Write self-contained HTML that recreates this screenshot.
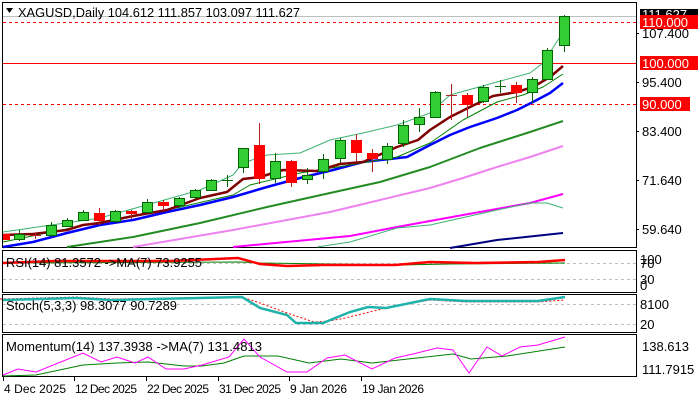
<!DOCTYPE html>
<html><head><meta charset="utf-8"><style>
html,body{margin:0;padding:0;background:#fff;}
svg{display:block;font-family:"Liberation Sans",sans-serif;}
</style></head><body>
<svg width="700" height="400" viewBox="0 0 700 400" xmlns="http://www.w3.org/2000/svg">
<rect width="700" height="400" fill="#fff"/>
<g fill="none" stroke="#000" stroke-width="1">
<rect x="2.5" y="2.5" width="634" height="245"/>
<rect x="2.5" y="250.5" width="634" height="42"/>
<rect x="2.5" y="294.5" width="634" height="38"/>
<rect x="2.5" y="334.5" width="634" height="42"/>
</g>
<line x1="3" y1="16.5" x2="636" y2="16.5" stroke="#c0c0c0"/>
<line x1="3" y1="22.5" x2="636" y2="22.5" stroke="#f00" stroke-dasharray="3,3"/>
<line x1="3" y1="63.5" x2="636" y2="63.5" stroke="#f00"/>
<line x1="3" y1="104.5" x2="636" y2="104.5" stroke="#f00" stroke-dasharray="3,3"/>
<g fill="none" stroke-linejoin="round">
<polyline stroke="#000080" stroke-width="2" points="450,248 497,240 563,233"/>
<polyline stroke="#ff00ff" stroke-width="2" points="233,247 350,236 397,227 463,215 530,203 563,194"/>
<polyline stroke="#ee82ee" stroke-width="2" points="133,247 233,230 330,212 380,200 430,188 463,178 497,167 530,157 563,146"/>
<polyline stroke="#228b22" stroke-width="2" points="67,247 133,237 200,223 267,207 330,193 380,182 430,167 480,148 530,132 563,121"/>
<polyline stroke="#3cb371" stroke-width="1" points="317,247 350,242 397,228 430,225 497,210 530,203 547,203 563,208"/>
<polyline stroke="#0000ff" stroke-width="2.5" points="3,247 33,242 67,233 100,225 133,220 167,212 200,205 233,197 267,187 300,178 333,170 363,162 407,157 430,145 450,135 470,127 497,118 517,110 533,102 550,93 563,83"/>
<polyline stroke="#008000" stroke-width="1" points="3,242 100,222 167,210 233,195 250,185 300,173 350,165 397,157 430,143 463,120 497,102 523,95 543,87 563,74"/>
<polyline stroke="#3cb371" stroke-width="1" points="3,232 100,218 200,190 233,175 243,163 267,155 300,153 330,140 363,133 397,125 430,113 450,95 497,82 530,73 543,63 560,37"/>
<polyline stroke="#800000" stroke-width="2.5" points="3,235 33,234 67,230 83,225 100,223 133,216 167,210 200,198 227,192 243,179 260,177 283,170 317,171 340,164 363,162 397,147 418,140 430,130 450,117 470,107 493,96 517,92 533,87 550,77 563,66"/>
</g>
<g stroke-width="1">
<g stroke="#006400">
<line x1="19.5" y1="230" x2="19.5" y2="241"/><rect x="14.5" y="234.5" width="10" height="5" fill="#32cd32"/>
<line x1="51.5" y1="222" x2="51.5" y2="237"/><rect x="46.5" y="225.5" width="10" height="10" fill="#32cd32"/>
<line x1="67.5" y1="218" x2="67.5" y2="227"/><rect x="62.5" y="220.5" width="10" height="6" fill="#32cd32"/>
<line x1="83.5" y1="210" x2="83.5" y2="221"/><rect x="78.5" y="212.5" width="10" height="8" fill="#32cd32"/>
<line x1="115.5" y1="210" x2="115.5" y2="223"/><rect x="110.5" y="211.5" width="10" height="10" fill="#32cd32"/>
<line x1="147.5" y1="199" x2="147.5" y2="213"/><rect x="142.5" y="202.5" width="10" height="10" fill="#32cd32"/>
<line x1="179.5" y1="197" x2="179.5" y2="209"/><rect x="174.5" y="198.5" width="10" height="7" fill="#32cd32"/>
<line x1="195.5" y1="189" x2="195.5" y2="199"/><rect x="190.5" y="190.5" width="10" height="7" fill="#32cd32"/>
<line x1="211.5" y1="179" x2="211.5" y2="191"/><rect x="206.5" y="180.5" width="10" height="10" fill="#32cd32"/>
<line x1="227.5" y1="175" x2="227.5" y2="187"/><line x1="222" y1="180.5" x2="233" y2="180.5"/>
<line x1="243.5" y1="148" x2="243.5" y2="173"/><rect x="238.5" y="148.5" width="10" height="19" fill="#32cd32"/>
<line x1="275.5" y1="153" x2="275.5" y2="183"/><rect x="270.5" y="161.5" width="10" height="17" fill="#32cd32"/>
<line x1="307.5" y1="168" x2="307.5" y2="184"/><rect x="302.5" y="175.5" width="10" height="4" fill="#32cd32"/>
<line x1="323.5" y1="154" x2="323.5" y2="179"/><rect x="318.5" y="159.5" width="10" height="12" fill="#32cd32"/>
<line x1="340.5" y1="138" x2="340.5" y2="163"/><rect x="335.5" y="140.5" width="10" height="18" fill="#32cd32"/>
<line x1="387.5" y1="143" x2="387.5" y2="164"/><rect x="382.5" y="146.5" width="10" height="13" fill="#32cd32"/>
<line x1="403.5" y1="120" x2="403.5" y2="147"/><rect x="398.5" y="125.5" width="10" height="18" fill="#32cd32"/>
<line x1="419.5" y1="108" x2="419.5" y2="132"/><rect x="414.5" y="117.5" width="10" height="7" fill="#32cd32"/>
<line x1="435.5" y1="91" x2="435.5" y2="118"/><rect x="430.5" y="92.5" width="10" height="25" fill="#32cd32"/>
<line x1="483.5" y1="85" x2="483.5" y2="103"/><rect x="478.5" y="87.5" width="10" height="14" fill="#32cd32"/>
<line x1="500.5" y1="80" x2="500.5" y2="93"/><line x1="495" y1="86.5" x2="506" y2="86.5"/>
<line x1="532.5" y1="77" x2="532.5" y2="103"/><rect x="527.5" y="79.5" width="10" height="13" fill="#32cd32"/>
<line x1="547.5" y1="48" x2="547.5" y2="80"/><rect x="542.5" y="50.5" width="10" height="29" fill="#32cd32"/>
<line x1="564.5" y1="15" x2="564.5" y2="52"/><rect x="559.5" y="16.5" width="10" height="29" fill="#32cd32"/>
</g>
<g stroke="#b22222">
<rect x="3" y="234" width="7" height="6" fill="#f00" stroke="none"/>
<line x1="35.5" y1="233" x2="35.5" y2="239"/><line x1="30" y1="235.5" x2="41" y2="235.5"/>
<line x1="99.5" y1="208" x2="99.5" y2="225"/><rect x="94" y="213" width="11" height="8" fill="#f00" stroke="none"/>
<line x1="131.5" y1="210" x2="131.5" y2="219"/><rect x="126" y="211" width="11" height="3" fill="#f00" stroke="none"/>
<line x1="163.5" y1="200" x2="163.5" y2="209"/><rect x="158" y="202" width="11" height="4" fill="#f00" stroke="none"/>
<line x1="259.5" y1="123" x2="259.5" y2="184"/><rect x="254" y="145" width="11" height="34" fill="#f00" stroke="none"/>
<line x1="291.5" y1="160" x2="291.5" y2="187"/><rect x="286" y="161" width="11" height="22" fill="#f00" stroke="none"/>
<line x1="356.5" y1="134" x2="356.5" y2="162"/><rect x="351" y="140" width="11" height="13" fill="#f00" stroke="none"/>
<line x1="372.5" y1="149" x2="372.5" y2="172"/><rect x="367" y="153" width="11" height="6" fill="#f00" stroke="none"/>
<line x1="451.5" y1="84" x2="451.5" y2="120"/><line x1="446" y1="95.5" x2="457" y2="95.5"/>
<line x1="467.5" y1="93" x2="467.5" y2="117"/><rect x="462" y="95" width="11" height="10" fill="#f00" stroke="none"/>
<line x1="516.5" y1="82" x2="516.5" y2="103"/><rect x="511" y="85" width="11" height="8" fill="#f00" stroke="none"/>
</g>
</g>
<path d="M6 8 L13 8 L9.5 13 Z" fill="#000"/>
<text x="18" y="17" font-size="13" fill="#000" textLength="282" lengthAdjust="spacingAndGlyphs">XAGUSD,Daily  104.612 111.857 103.097 111.627</text>
<g font-size="13" fill="#000">
<rect x="640" y="9" width="58" height="10" fill="#000"/>
<text x="642" y="19" fill="#fff">111.627</text>
<rect x="640" y="15" width="58" height="14" fill="#f00"/>
<text x="642" y="27" fill="#fff">110.000</text>
<text x="642" y="38">107.400</text>
<rect x="640" y="56" width="58" height="14" fill="#f00"/>
<text x="642" y="68" fill="#fff">100.000</text>
<text x="642" y="87">95.400</text>
<rect x="640" y="97" width="50" height="14" fill="#f00"/>
<text x="642" y="109" fill="#fff">90.000</text>
<text x="642" y="136">83.400</text>
<text x="642" y="185">71.640</text>
<text x="642" y="234">59.640</text>
</g>
<g stroke="#000"><line x1="636" y1="33.5" x2="639" y2="33.5"/><line x1="636" y1="82.5" x2="639" y2="82.5"/><line x1="636" y1="131.5" x2="639" y2="131.5"/><line x1="636" y1="180.5" x2="639" y2="180.5"/><line x1="636" y1="229.5" x2="639" y2="229.5"/></g>
<g stroke="#c0c0c0" stroke-dasharray="3,3"><line x1="3" y1="263.5" x2="636" y2="263.5"/><line x1="3" y1="279.5" x2="636" y2="279.5"/>
<line x1="3" y1="304.5" x2="636" y2="304.5"/><line x1="3" y1="324.5" x2="636" y2="324.5"/></g>
<polyline fill="none" stroke="#008000" stroke-width="1" points="3,263 240,262 260,263 330,264 400,265 450,264 565,263"/>
<polyline fill="none" stroke="#f00" stroke-width="2.5" points="3,263 54,261 112,261 170,261 238,258 260,264 287,266 323,265 350,265 395,265 430,262 475,263 538,262 565,260"/>
<text x="6" y="267" font-size="13" fill="#000" textLength="196" lengthAdjust="spacingAndGlyphs">RSI(14) 81.3572  -&gt;MA(7) 73.9255</text>
<g font-size="13" fill="#000"><text x="640" y="264">100</text><text x="640" y="268">70</text><text x="640" y="284">30</text><text x="640" y="290">0</text></g>
<polyline fill="none" stroke="#f00" stroke-width="1" stroke-dasharray="2,2" points="0,299 76,297 112,299 242,297 260,303 287,313 314,322 330,321 345,318 386,308 430,300 466,302 538,302 565,300"/>
<polyline fill="none" stroke="#20b2aa" stroke-width="2.5" points="3,300 76,298 112,300 242,297 260,308 287,315 296,323 323,323 350,312 368,307 386,308 430,299 466,301 538,301 565,297"/>
<text x="6" y="310" font-size="13" fill="#000" textLength="171" lengthAdjust="spacingAndGlyphs">Stoch(5,3,3) 98.3077 90.7289</text>
<g font-size="13" fill="#000"><text x="640" y="309">8100</text><text x="640" y="329">20</text></g>
<polyline fill="none" stroke="#008000" stroke-width="1" points="3,376 36,375 83,365 117,363 148,362 184,366 202,366 224,363 244,356 278,356 309,363 341,359 372,363 453,354 471,359 507,356 565,347"/>
<polyline fill="none" stroke="#ff00ff" stroke-width="1" points="3,375 18,369 36,372 83,353 101,362 117,357 135,363 148,357 166,369 184,369 202,365 229,357 244,339 260,357 287,372 307,372 327,358 345,355 372,369 395,358 413,354 437,348 453,350 469,373 487,347 502,356 520,347 538,345 565,337"/>
<text x="6" y="351" font-size="13" fill="#000" textLength="256" lengthAdjust="spacingAndGlyphs">Momentum(14) 137.3938  -&gt;MA(7) 131.4813</text>
<g font-size="13" fill="#000"><text x="642" y="351">138.613</text><text x="642" y="374">111.7915</text></g>
<g stroke="#000"><line x1="3.5" y1="377" x2="3.5" y2="381"/><line x1="74.5" y1="377" x2="74.5" y2="381"/><line x1="146.5" y1="377" x2="146.5" y2="381"/><line x1="218.5" y1="377" x2="218.5" y2="381"/><line x1="289.5" y1="377" x2="289.5" y2="381"/><line x1="361.5" y1="377" x2="361.5" y2="381"/></g>
<g font-size="12" fill="#000" lengthAdjust="spacingAndGlyphs">
<text x="4" y="393" textLength="62">4 Dec 2025</text><text x="75" y="393" textLength="62">12 Dec 2025</text><text x="147" y="393" textLength="62">22 Dec 2025</text><text x="219" y="393" textLength="62">31 Dec 2025</text><text x="290" y="393" textLength="57">9 Jan 2026</text><text x="362" y="393" textLength="62">19 Jan 2026</text>
</g>
</svg>
</body></html>
